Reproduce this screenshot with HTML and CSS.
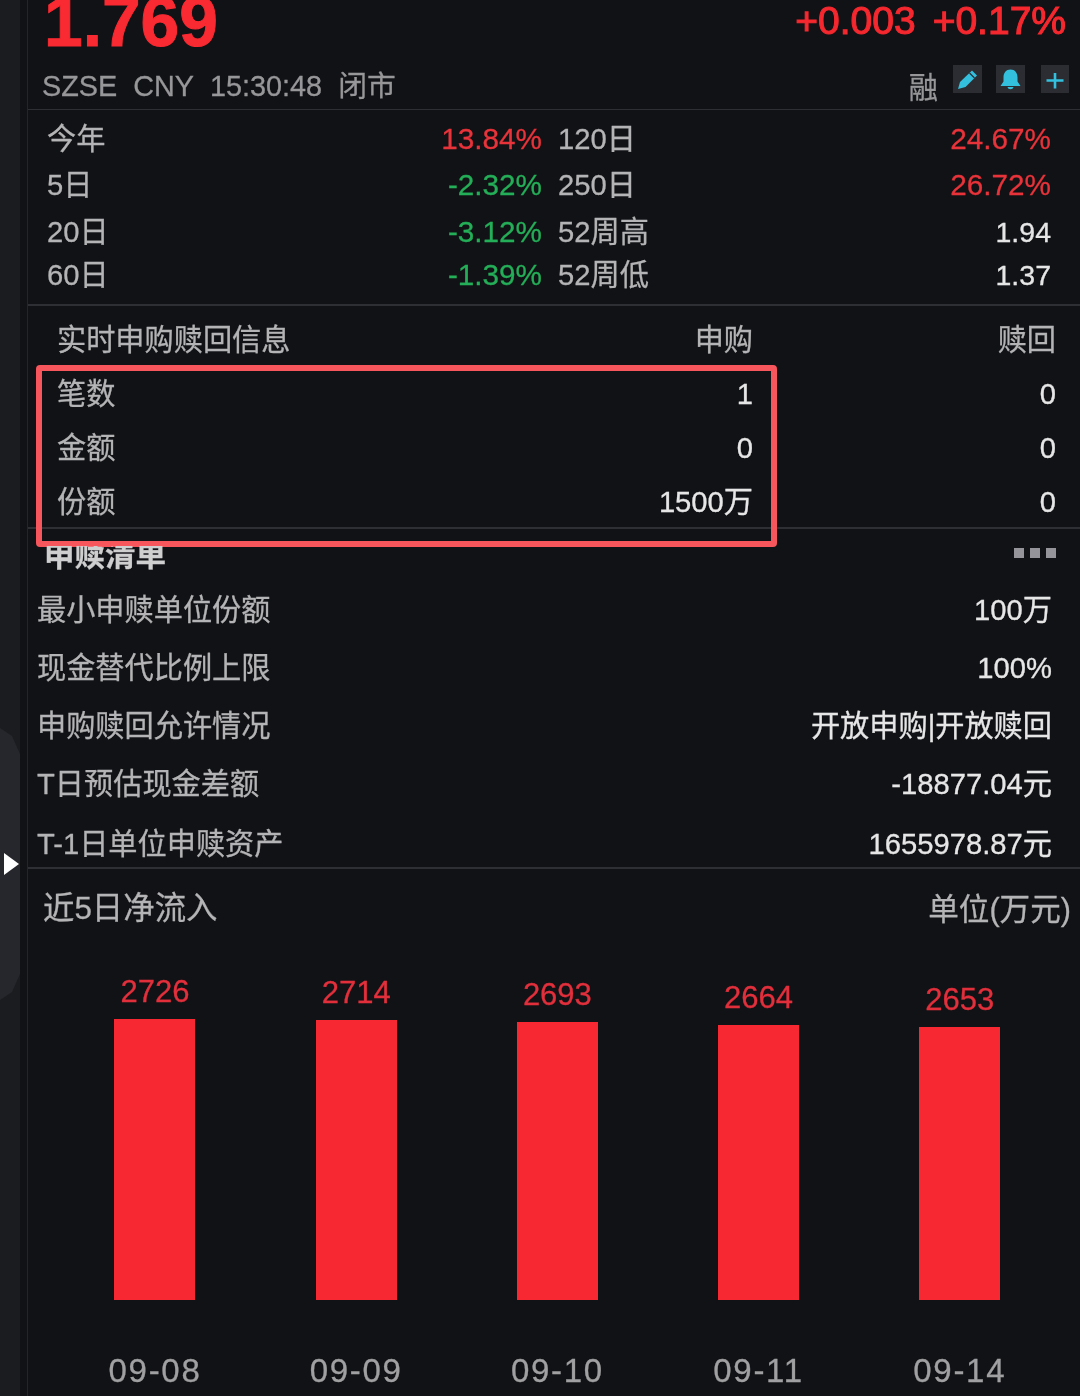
FILE: index.html
```html
<!DOCTYPE html>
<html lang="zh-CN">
<head>
    <meta charset="UTF-8">
    <title>实时申购赎回信息</title>
    <link rel="stylesheet" href="styles.css">
</head>
<body>
<div id="app">
    <div class="rail">
        <div class="handle"></div>
        <div class="arrow"></div>
    </div>
    <div class="main">
        <div class="quote">
            <div class="quote-top">
                <span class="price">1.769</span>
                <div class="change"><span>+0.003</span><span>+0.17%</span></div>
            </div>
            <div class="quote-bottom">
                <div class="market"><span>SZSE</span><span>CNY</span><span>15:30:48</span><span>闭市</span></div>
                <div class="tools">
                    <span class="rong">融</span>
                    <span class="tool tool-edit">
                        <svg width="29" height="28" viewBox="0 0 29 28"><path d="M5 24l2-7L19 5.500l5 5L12.500 22z" fill="#33c0de"/><path d="M16.500 8l5 5" stroke="#2c2d31" stroke-width="1.200"/></svg>
                    </span>
                    <span class="tool tool-bell">
                        <svg width="29" height="28" viewBox="0 0 29 28"><path d="M14.500 4.500c4.500 0 7 3.500 7 8v4l3 4.500H4.500l3-4.500v-4c0-4.500 2.500-8 7-8z" fill="#33c0de"/><path d="M11.500 22h6c-.4 1.500-1.500 2.200-3 2.200s-2.600-.7-3-2.200z" fill="#33c0de"/></svg>
                    </span>
                    <span class="tool tool-plus">
                        <svg width="28" height="28" viewBox="0 0 28 28"><path d="M14 8v15.500M5.500 15.500h17" stroke="#33c0de" stroke-width="2.600" fill="none"/></svg>
                    </span>
                </div>
            </div>
        </div>

        <div class="stats">
            <div class="stat-row row-a"><span class="label">今年</span><span class="num red">13.84%</span><span class="label">120日</span><span class="num red">24.67%</span></div>
            <div class="stat-row row-b"><span class="label">5日</span><span class="num green">-2.32%</span><span class="label">250日</span><span class="num red">26.72%</span></div>
            <div class="stat-row row-c"><span class="label">20日</span><span class="num green">-3.12%</span><span class="label">52周高</span><span class="num plain">1.94</span></div>
            <div class="stat-row row-d"><span class="label">60日</span><span class="num green">-1.39%</span><span class="label">52周低</span><span class="num plain">1.37</span></div>
        </div>

        <div class="realtime">
            <div class="rt-row rt-head"><span>实时申购赎回信息</span><span>申购</span><span>赎回</span></div>
            <div class="rt-row"><span>笔数</span><span class="val">1</span><span class="val">0</span></div>
            <div class="rt-row"><span>金额</span><span class="val">0</span><span class="val">0</span></div>
            <div class="rt-row"><span>份额</span><span class="val">1500万</span><span class="val">0</span></div>
            <div class="highlight"></div>
        </div>

        <div class="list">
            <div class="list-head">
                <span class="list-title">申赎清单</span>
                <span class="dots"><i></i><i></i><i></i></span>
            </div>
            <div class="list-row"><span>最小申赎单位份额</span><span class="val">100万</span></div>
            <div class="list-row"><span>现金替代比例上限</span><span class="val">100%</span></div>
            <div class="list-row"><span>申购赎回允许情况</span><span class="val">开放申购|开放赎回</span></div>
            <div class="list-row"><span>T日预估现金差额</span><span class="val">-18877.04元</span></div>
            <div class="list-row"><span>T-1日单位申赎资产</span><span class="val">1655978.87元</span></div>
        </div>

        <div class="flow">
            <div class="flow-head"><span class="flow-title">近5日净流入</span><span class="flow-unit">单位(万元)</span></div>
            <div class="chart">
                <div class="col"><span class="amount">2726</span><div class="bar" style="height:281px"></div><span class="date">09-08</span></div>
                <div class="col"><span class="amount">2714</span><div class="bar" style="height:280px"></div><span class="date">09-09</span></div>
                <div class="col"><span class="amount">2693</span><div class="bar" style="height:278px"></div><span class="date">09-10</span></div>
                <div class="col"><span class="amount">2664</span><div class="bar" style="height:275px"></div><span class="date">09-11</span></div>
                <div class="col"><span class="amount">2653</span><div class="bar" style="height:273px"></div><span class="date">09-14</span></div>
            </div>
        </div>
    </div>
</div>
</body>
</html>
```

FILE: styles.css
```css
*{
    margin: 0;
    padding: 0;
    box-sizing: border-box;
}
html, body{
    width: 1080px;
    height: 1396px;
    overflow: hidden;
    background: #111215;
}
#app{
    display: flex;
    width: 1080px;
    height: 1396px;
    font-family: "Liberation Sans", "Noto Sans CJK SC", sans-serif;
    font-size: 29.2px;
    line-height: 36px;
    color: #b4b4b6;
    -webkit-text-stroke: 0.3px currentColor;
    filter: blur(0.5px);
}
.rail{
    position: relative;
    width: 28px;
    flex: none;
    background: #111215;
    border-right: 1px solid #24252a;
}
.rail::before{
    content: "";
    display: block;
    width: 20px;
    height: 100%;
    background: #1b1c20;
}
.handle{
    position: absolute;
    left: 0;
    top: 728px;
    width: 20px;
    height: 272px;
    background: #26272c;
    clip-path: polygon(0 0, 60% 8px, 100% 26px, 100% 246px, 60% 264px, 0 100%);
}
.arrow{
    position: absolute;
    left: 4px;
    top: 853px;
    width: 0;
    height: 0;
    border-left: 15px solid #fff;
    border-top: 11px solid transparent;
    border-bottom: 11px solid transparent;
}
.main{
    flex: 1;
    min-width: 0;
}

/* quote header */
.quote{
    height: 110px;
    border-bottom: 1px solid #2e2f34;
}
.quote-top{
    display: flex;
    justify-content: space-between;
    height: 60px;
    padding: 0 14px 0 16px;
}
.price{
    margin-top: -17px;
    font-size: 69.500px;
    line-height: 78px;
    font-weight: bold;
    color: #fa2a32;
    -webkit-text-stroke: 1px #fa2a32;
}
.change{
    display: flex;
    gap: 17px;
    font-size: 39px;
    line-height: 42px;
    color: #f5282f;
    -webkit-text-stroke: 1.100px #f5282f;
}
.quote-bottom{
    display: flex;
    justify-content: space-between;
    align-items: center;
    height: 50px;
    padding: 0 11px 0 14px;
}
.market{
    display: flex;
    gap: 16px;
    margin-top: 1px;
    font-size: 28.800px;
    color: #97979a;
}
.tools{
    display: flex;
    align-items: center;
    margin-top: -12px;
}
.rong{
    margin-top: 17px;
    margin-right: 15px;
    color: #97979a;
}
.tool{
    display: block;
    height: 28px;
    background: #2c2d32;
}
.tool svg{
    display: block;
}
.tool-edit{
    width: 29px;
    margin-right: 14px;
}
.tool-bell{
    width: 29px;
    margin-right: 16px;
}
.tool-plus{
    width: 28px;
}

/* stats */
.stats{
    height: 196px;
    padding: 6px 29px 0 19px;
    border-bottom: 2px solid #2e2f34;
}
.stat-row{
    display: grid;
    grid-template-columns: 495px 1fr 200px;
    align-items: center;
}
.stat-row span:nth-child(1){
    grid-column: 1;
    grid-row: 1;
}
.stat-row span:nth-child(2){
    grid-column: 1;
    grid-row: 1;
    justify-self: end;
}
.stat-row span:nth-child(3){
    grid-column: 2;
    padding-left: 16px;
}
.stat-row span:nth-child(4){
    grid-column: 3;
    justify-self: end;
}
.row-a, .row-b{
    height: 46px;
}
.row-c{
    height: 48px;
}
.row-d{
    height: 38px;
}
.num{
    font-size: 29.700px;
    color: #e6e6e7;
}
.plain{
    font-size: 28.500px;
}
.red{
    color: #e8333a;
}
.green{
    color: #24ae58;
}

/* realtime */
.realtime{
    position: relative;
    height: 223px;
    padding: 7px 24px 0 29px;
    border-bottom: 2px solid #2e2f34;
}
.rt-row{
    display: grid;
    grid-template-columns: 1fr auto 303px;
    align-items: center;
    height: 54px;
}
.rt-row span:nth-child(3){
    justify-self: end;
}
.val{
    color: #e6e6e7;
}
.highlight{
    position: absolute;
    left: 8px;
    top: 59px;
    width: 741px;
    height: 182px;
    border: 6px solid #f6565c;
    border-radius: 4px;
}

/* list */
.list{
    height: 340px;
    border-bottom: 2px solid #2e2f34;
    overflow: hidden;
}
.list-head{
    display: flex;
    justify-content: space-between;
    align-items: center;
    height: 52px;
    padding: 0 24px 0 16px;
}
.list-title{
    font-size: 30.500px;
    font-weight: bold;
    color: #cfcfd0;
    clip-path: inset(9px 0 0 0);
}
.dots{
    display: flex;
    gap: 6px;
    margin-top: -4px;
}
.dots i{
    display: block;
    width: 10px;
    height: 10px;
    background: #94949a;
}
.list-row{
    display: flex;
    justify-content: space-between;
    align-items: center;
    height: 58px;
    padding: 0 28px 0 9px;
}
.list-row:last-child{
    padding-top: 3px;
}

/* net flow */
.flow-head{
    display: flex;
    justify-content: space-between;
    align-items: center;
    height: 78px;
    padding: 1px 9px 0 15px;
}
.flow-title{
    font-size: 31.400px;
}
.flow-unit{
    font-size: 30.600px;
}
.chart{
    display: flex;
    height: 450px;
    padding-left: 26.400px;
    align-items: flex-end;
}
.col{
    display: flex;
    flex-direction: column;
    align-items: center;
    width: 201.200px;
}
.amount{
    font-size: 31px;
    color: #e22f3c;
    line-height: 40px;
    margin-bottom: 7px;
}
.bar{
    width: 81px;
    background: #f82832;
}
.date{
    height: 97px;
    line-height: 142px;
    color: #a0a0a2;
    font-size: 33px;
    letter-spacing: 1.700px;
}
```
